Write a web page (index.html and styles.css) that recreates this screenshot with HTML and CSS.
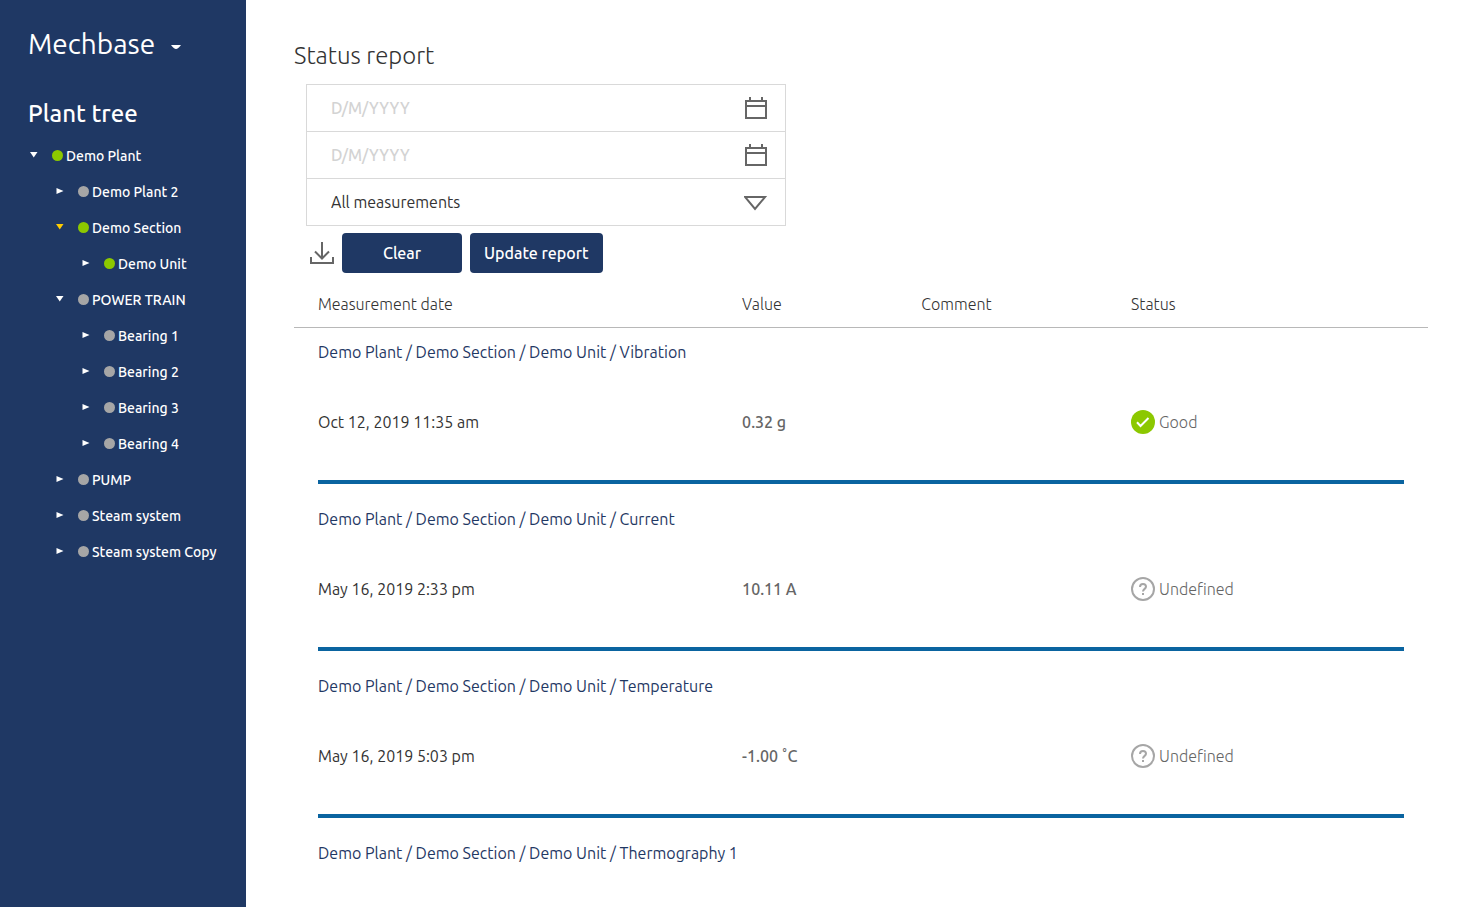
FILE: index.html
```html
<!DOCTYPE html>
<html lang="en">
<head>
<meta charset="utf-8">
<title>Status report - Mechbase</title>
<link rel="stylesheet" href="styles.css">
</head>
<body>
<svg class="sprite" aria-hidden="true">
  <symbol id="down" viewBox="0 0 8 8"><path d="M0 1h7.500L3.750 6.500z" fill="currentColor"/></symbol>
  <symbol id="right" viewBox="0 0 8 8"><path d="M.5 1v6L7.500 4z" fill="currentColor"/></symbol>
  <symbol id="calendar" viewBox="0 0 24 24"><path d="M2 5h20v17H2zM2 10h20M6 1v4M18 1v4" fill="none" stroke="currentColor" stroke-width="2"/></symbol>
  <symbol id="unknown" viewBox="0 0 24 24"><circle cx="12" cy="12" r="11" fill="none" stroke="currentColor" stroke-width="2"/><path d="M9 10c0-1.800 1.300-3 3-3s3 1.200 3 2.800c0 2-3 2.200-3 4.700M12 16v2" fill="none" stroke="currentColor" stroke-width="2"/></symbol>
  <symbol id="good" viewBox="0 0 24 24"><circle cx="12" cy="12" r="12" fill="currentColor"/><path d="M6 12.300l3.500 3.700 8-8" fill="none" stroke="#fff" stroke-width="2"/></symbol>
</svg>
<div class="app">
  <aside class="sidebar">
    <button class="brand" type="button">Mechbase
      <svg class="brand-caret" viewBox="0 0 10 5"><path d="M0 0h10Q7 4 5 4T0 0z" fill="currentColor"/></svg>
    </button>
    <h2 class="tree-title">Plant tree</h2>
    <nav aria-label="Plant tree">
      <ul class="tree">
        <li>
          <div class="node"><button class="toggle" aria-label="Collapse"><svg><use href="#down"/></svg></button><a class="link good" href="#">Demo Plant</a></div>
          <ul class="tree branch">
            <li><div class="node"><button class="toggle" aria-label="Expand"><svg><use href="#right"/></svg></button><a class="link" href="#">Demo Plant 2</a></div></li>
            <li>
              <div class="node"><button class="toggle active" aria-label="Collapse"><svg><use href="#down"/></svg></button><a class="link good" href="#">Demo Section</a></div>
              <ul class="tree branch">
                <li><div class="node"><button class="toggle" aria-label="Expand"><svg><use href="#right"/></svg></button><a class="link good" href="#">Demo Unit</a></div></li>
              </ul>
            </li>
            <li>
              <div class="node"><button class="toggle" aria-label="Collapse"><svg><use href="#down"/></svg></button><a class="link" href="#">POWER TRAIN</a></div>
              <ul class="tree branch">
                <li><div class="node"><button class="toggle" aria-label="Expand"><svg><use href="#right"/></svg></button><a class="link" href="#">Bearing 1</a></div></li>
                <li><div class="node"><button class="toggle" aria-label="Expand"><svg><use href="#right"/></svg></button><a class="link" href="#">Bearing 2</a></div></li>
                <li><div class="node"><button class="toggle" aria-label="Expand"><svg><use href="#right"/></svg></button><a class="link" href="#">Bearing 3</a></div></li>
                <li><div class="node"><button class="toggle" aria-label="Expand"><svg><use href="#right"/></svg></button><a class="link" href="#">Bearing 4</a></div></li>
              </ul>
            </li>
            <li><div class="node"><button class="toggle" aria-label="Expand"><svg><use href="#right"/></svg></button><a class="link" href="#">PUMP</a></div></li>
            <li><div class="node"><button class="toggle" aria-label="Expand"><svg><use href="#right"/></svg></button><a class="link" href="#">Steam system</a></div></li>
            <li><div class="node"><button class="toggle" aria-label="Expand"><svg><use href="#right"/></svg></button><a class="link" href="#">Steam system Copy</a></div></li>
          </ul>
        </li>
      </ul>
    </nav>
  </aside>
  <main class="main">
    <h1 class="title">Status report</h1>
    <form class="filters">
      <div class="fields">
        <div class="field"><input class="control" type="text" placeholder="D/M/YYYY" aria-label="From date"><button class="icon-button" type="button" aria-label="Open calendar"><svg class="icon"><use href="#calendar"/></svg></button></div>
        <div class="field"><input class="control" type="text" placeholder="D/M/YYYY" aria-label="To date"><button class="icon-button" type="button" aria-label="Open calendar"><svg class="icon"><use href="#calendar"/></svg></button></div>
        <div class="field"><select class="control" aria-label="Measurements"><option>All measurements</option></select><svg class="icon" viewBox="0 0 24 24"><path d="M1 7h20L11 19z" fill="none" stroke="currentColor" stroke-width="2"/></svg></div>
      </div>
      <div class="actions">
        <button class="icon-button download" type="button" aria-label="Download"><svg class="icon" viewBox="0 0 24 24"><path d="M1 16v6h22v-6M12 1v16M5 10.500l7 7 7-7" fill="none" stroke="currentColor" stroke-width="2"/></svg></button>
        <button class="button" type="reset">Clear</button>
        <button class="button" type="submit">Update report</button>
      </div>
    </form>
    <table class="report">
      <colgroup><col class="col-date"><col class="col-value"><col class="col-comment"><col class="col-status"></colgroup>
      <thead><tr><th>Measurement date</th><th>Value</th><th>Comment</th><th>Status</th></tr></thead>
      <tbody>
        <tr class="path"><td colspan="4"><a href="#">Demo Plant / Demo Section / Demo Unit / Vibration</a></td></tr>
        <tr class="reading"><td>Oct 12, 2019 11:35 am</td><td class="value">0.32 g</td><td></td><td><span class="status"><svg class="icon status-good"><use href="#good"/></svg>Good</span></td></tr>
        <tr class="divider"><td colspan="4"><hr></td></tr>
      </tbody>
      <tbody>
        <tr class="path"><td colspan="4"><a href="#">Demo Plant / Demo Section / Demo Unit / Current</a></td></tr>
        <tr class="reading"><td>May 16, 2019 2:33 pm</td><td class="value">10.11 A</td><td></td><td><span class="status"><svg class="icon status-unknown"><use href="#unknown"/></svg>Undefined</span></td></tr>
        <tr class="divider"><td colspan="4"><hr></td></tr>
      </tbody>
      <tbody>
        <tr class="path"><td colspan="4"><a href="#">Demo Plant / Demo Section / Demo Unit / Temperature</a></td></tr>
        <tr class="reading"><td>May 16, 2019 5:03 pm</td><td class="value">-1.00 ˚C</td><td></td><td><span class="status"><svg class="icon status-unknown"><use href="#unknown"/></svg>Undefined</span></td></tr>
        <tr class="divider"><td colspan="4"><hr></td></tr>
      </tbody>
      <tbody>
        <tr class="path"><td colspan="4"><a href="#">Demo Plant / Demo Section / Demo Unit / Thermography 1</a></td></tr>
      </tbody>
    </table>
  </main>
</div>
</body>
</html>
```
FILE: styles.css
```css
* { box-sizing: border-box; }

body {
  margin: 0;
  font: 400 16px/24px Ubuntu, "Noto Sans", sans-serif;
  color: #333;
  background: #fff;
}

button, input, select { font: inherit; color: inherit; }

button {
  padding: 0;
  border: 0;
  background: none;
  cursor: pointer;
}

a { color: inherit; text-decoration: none; }

.sprite { display: none; }

.app { display: flex; min-height: 100vh; }

.sidebar {
  flex: 0 0 246px;
  padding: 24px 0 24px 28px;
  background: #1f3864;
  color: #fff;
}

.brand {
  display: flex;
  align-items: center;
  gap: 16px;
  font-size: 28px;
  line-height: 40px;
}

.brand-caret { width: 10px; height: 5px; margin-top: 6px; }

.tree-title {
  margin: 32px 0 6px;
  font-size: 24px;
  font-weight: 500;
  line-height: 36px;
}

.tree { margin: 0; padding: 0; list-style: none; }
.branch { padding-left: 26px; }

.node {
  display: flex;
  align-items: center;
  height: 36px;
  font-size: 14px;
  font-weight: 500;
  white-space: nowrap;
}

.toggle { display: flex; width: 24px; height: 12px; padding: 1px 0 0 2px; }
.toggle svg { width: 8px; height: 8px; }
.toggle.active { color: #fc0; }

.link { display: flex; align-items: center; gap: 3px; }

.link::before {
  content: "";
  width: 11px;
  height: 11px;
  margin-bottom: 2px;
  border-radius: 50%;
  background: #a6a6a6;
}

.link.good::before { background: #8cc800; }

.main { flex: 1; min-width: 0; padding: 40px 47px 0 48px; }

.title {
  margin: 0 0 12px;
  font-size: 24px;
  font-weight: 300;
  line-height: 32px;
}

.filters { margin: 0 12px 8px; }

.fields { max-width: 480px; border: 1px solid #d9d9d9; }

.field {
  display: flex;
  align-items: center;
  height: 46px;
  padding: 0 17px 0 24px;
}

.field + .field { height: 47px; border-top: 1px solid #d9d9d9; }

.control {
  flex: 1;
  min-width: 0;
  height: 100%;
  padding: 0;
  border: 0;
  outline: 0;
  background: none;
  appearance: none;
}

.control::placeholder { color: #d3d3d3; font-weight: 500; opacity: 1; }

.icon { display: block; width: 24px; height: 24px; color: #666; }

.actions { display: flex; align-items: center; gap: 8px; margin-top: 7px; }

.download { padding-left: 4px; }

.button {
  min-width: 120px;
  height: 40px;
  padding: 0 14px;
  border-radius: 4px;
  background: #1f3864;
  color: #fff;
  font-weight: 500;
}

.report { width: 100%; border-collapse: separate; border-spacing: 0; table-layout: fixed; }

.col-date { width: 37.4%; }
.col-value { width: 15.8%; }
.col-comment { width: 18.5%; }

.report th, .report td { padding: 0 24px; text-align: left; }

.report th {
  height: 47px;
  border-bottom: 1px solid #b8b8b8;
  font-weight: 300;
}

.path td { height: 47px; color: #1f3864; }
.reading td { height: 93px; }
.report .divider td { padding: 12px 24px 11px; }

.divider hr { height: 4px; margin: 0; border: 0; background: #0a64a0; }

.report .value { color: #666; font-weight: 500; }

.status { display: flex; align-items: center; gap: 4px; color: #666; font-weight: 300; }
.status .status-good { color: #8cc800; }
.status .status-unknown { color: #a6a6a6; }
```
